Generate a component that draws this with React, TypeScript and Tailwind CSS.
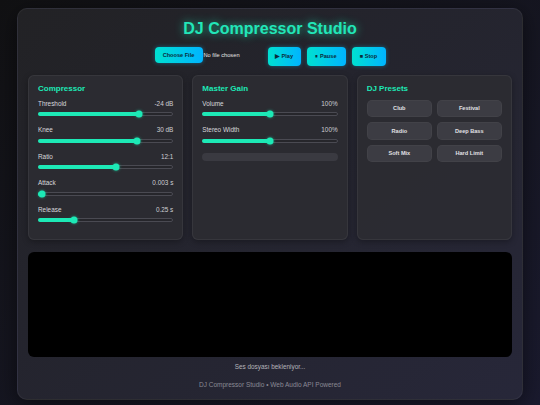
import React from 'react';

const compressor = [
  { label: 'Threshold', value: '-24 dB', pct: 76 },
  { label: 'Knee', value: '30 dB', pct: 75 },
  { label: 'Ratio', value: '12:1', pct: 57.9 },
  { label: 'Attack', value: '0.003 s', pct: 0.3 },
  { label: 'Release', value: '0.25 s', pct: 25 },
];

const master = [
  { label: 'Volume', value: '100%', pct: 50 },
  { label: 'Stereo Width', value: '100%', pct: 50 },
];

const presets = ['Club', 'Festival', 'Radio', 'Deep Bass', 'Soft Mix', 'Hard Limit'];

function Slider({ label, value, pct }: { label: string; value: string; pct: number }) {
  return (
    <div className="flex flex-col">
      <div className="flex justify-between h-[8px] leading-[8px] text-[6.4px] text-[#d8d8dc]">
        <span>{label}</span>
        <span className="text-[#cfcfd4]">{value}</span>
      </div>
      <div className="mt-[3.5px] h-[6px] flex items-center">
        <div className="relative w-full h-[4px] rounded-full bg-[#26262b] border border-[#4a4a52]">
          <div className="absolute -left-px -top-px h-[4px] rounded-full bg-[#1de9b6]" style={{ width: `calc(3px + ${pct / 100} * (100% - 6px))` }} />
          <div
            className="absolute top-1/2 w-[7px] h-[7px] -translate-y-1/2 -translate-x-1/2 rounded-full bg-[#1de9b6] shadow-[0_0_3px_rgba(29,233,182,0.6)]"
            style={{ left: `calc(3px + ${pct / 100} * (100% - 6px))` }}
          />
        </div>
      </div>
    </div>
  );
}

function Panel({ title, children }: { title: string; children: React.ReactNode }) {
  return (
    <div className="flex-1 h-[165px] rounded-[6px] bg-[#2c2c32]/90 border border-white/5 px-[9px] pt-[7.5px] shadow-[0_2px_6px_rgba(0,0,0,0.3)]">
      <h3 className="text-[8px] leading-[10px] font-bold text-[#1de9b6]">{title}</h3>
      {children}
    </div>
  );
}

export default function App() {
  return (
    <div
      className="w-[540px] h-[405px] overflow-hidden bg-gradient-to-br from-[#111113] to-[#1a1a2e] pt-[8px] px-[17px]"
      style={{ fontFamily: '"Liberation Sans", Arial, sans-serif' }}
    >
      <div className="h-[392px] rounded-[10px] bg-gradient-to-br from-[#222225] to-[#272739] border border-white/5 px-[10px] pt-[10px] shadow-[0_4px_20px_rgba(0,0,0,0.5)]">
        <h1 className="text-center text-[16px] leading-[19px] font-bold text-[#22e6b8] [text-shadow:0_0_8px_rgba(29,233,182,0.75)]">
          DJ Compressor Studio
        </h1>

        <div className="mt-[9px] flex justify-center items-start gap-[6px]">
          <div className="w-[107px] flex items-center gap-[1px]">
            <button className="w-[48px] h-[16px] rounded-[4px] bg-gradient-to-r from-[#00e0d0] to-[#00b4ff] text-[5.6px] font-bold text-[#0b2b3b] shadow-[0_0_4px_rgba(0,200,255,0.4)]">
              Choose File
            </button>
            <span className="text-[5.7px] text-[#e5e5e5]">No file chosen</span>
          </div>
          <button className="w-[33px] h-[19px] rounded-[4px] bg-gradient-to-r from-[#00e0d0] to-[#00b4ff] text-[5.6px] font-bold text-[#0b2b3b] shadow-[0_0_4px_rgba(0,200,255,0.4)]">
            ▶ Play
          </button>
          <button className="w-[39px] h-[19px] rounded-[4px] bg-gradient-to-r from-[#00e0d0] to-[#00b4ff] text-[5.6px] font-bold text-[#0b2b3b] shadow-[0_0_4px_rgba(0,200,255,0.4)]">
            ⏸ Pause
          </button>
          <button className="w-[34px] h-[19px] rounded-[4px] bg-gradient-to-r from-[#00e0d0] to-[#00b4ff] text-[5.6px] font-bold text-[#0b2b3b] shadow-[0_0_4px_rgba(0,200,255,0.4)]">
            ■ Stop
          </button>
        </div>

        <div className="mt-[9px] flex gap-[9px]">
          <Panel title="Compressor">
            <div className="mt-[6px] flex flex-col gap-[9.1px]">
              {compressor.map(s => <Slider key={s.label} {...s} />)}
            </div>
          </Panel>
          <Panel title="Master Gain">
            <div className="mt-[6px] flex flex-col gap-[9.1px]">
              {master.map(s => <Slider key={s.label} {...s} />)}
            </div>
            <div className="mt-[9.5px] h-[8px] rounded-full bg-[#3a3a41]" />
          </Panel>
          <Panel title="DJ Presets">
            <div className="mt-[6.5px] grid grid-cols-2 gap-x-[4.6px] gap-y-[5px]">
              {presets.map(p => (
                <button key={p} className="h-[17.3px] rounded-[5px] bg-[#3c3c43] border border-white/[0.03] text-[5.6px] font-bold text-[#e0e0e4]">
                  {p}
                </button>
              ))}
            </div>
          </Panel>
        </div>

        <div className="mt-[12px] h-[105px] rounded-[6px] bg-black" />

        <p className="mt-[6px] text-center text-[6.4px] leading-[8px] text-[#b4b4ba]">Ses dosyası bekleniyor...</p>
        <p className="mt-[10px] text-center text-[6.5px] leading-[8px] text-[#8a8a94]">DJ Compressor Studio • Web Audio API Powered</p>
      </div>
    </div>
  );
}
